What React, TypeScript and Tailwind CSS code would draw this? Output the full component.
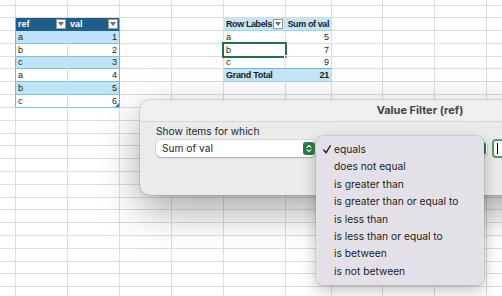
import React from "react";

const COLS = [
  "w-[16px]",
  "w-[52px]",
  "w-[52px]",
  "w-[52px]",
  "w-[52px]",
  "w-[62px]",
  "w-[46px]",
  "w-[51px]",
  "w-[52px]",
  "w-[52px]",
  "w-[30px]",
];

const ROWS = [
  "h-[6px]", "h-[12px]", "h-[13px]", "h-[13px]", "h-[13px]", "h-[12px]",
  "h-[13px]", "h-[13px]", "h-[13px]", "h-[13px]", "h-[13px]", "h-[12px]",
  "h-[13px]", "h-[13px]", "h-[13px]", "h-[13px]", "h-[12px]", "h-[13px]",
  "h-[13px]", "h-[13px]", "h-[13px]", "h-[12px]", "h-[13px]", "h-[10px]",
];

const TABLE = [
  ["a", "1"],
  ["b", "2"],
  ["c", "3"],
  ["a", "4"],
  ["b", "5"],
  ["c", "6"],
];

const PIVOT = [
  ["a", "5"],
  ["b", "7"],
  ["c", "9"],
];

const OPTIONS = [
  "equals",
  "does not equal",
  "is greater than",
  "is greater than or equal to",
  "is less than",
  "is less than or equal to",
  "is between",
  "is not between",
];

function FilterButton() {
  return (
    <div className="flex h-[10px] w-[10px] shrink-0 items-center justify-center border border-[#9a9a9a] bg-white">
      <svg width="6" height="4" viewBox="0 0 6 4">
        <path d="M0 0 L6 0 L3 4 Z" fill="#6b6b6b" />
      </svg>
    </div>
  );
}

function Stepper() {
  return (
    <div className="flex h-[13px] w-[12px] items-center justify-center rounded-[3px] bg-[#2e7c49]">
      <svg width="6" height="9" viewBox="0 0 6 9" fill="none" stroke="white" strokeWidth="1.1" strokeLinecap="round" strokeLinejoin="round">
        <path d="M1 3.3 L3 1.3 L5 3.3" />
        <path d="M1 5.7 L3 7.7 L5 5.7" />
      </svg>
    </div>
  );
}

// what goes into one grid cell; returns classes and content
function cellFor(r: number, c: number): { cls: string; body?: React.ReactNode } {
  const grid = "border-r border-b border-[#dcdcdc]";
  const t = r - 3; // table data row index

  // source table: header at row 2, data rows 3..8, columns 1..2
  if (c === 0 && r >= 2 && r <= 8) {
    return { cls: "border-b border-r border-b-[#dcdcdc] border-r-[#6fb7df]" };
  }
  if ((c === 1 || c === 2) && r === 2) {
    return {
      cls: "border-r border-b border-[#1f5e8b] bg-[#1f5e8b] " + (c === 1 ? "border-r-[#1f5e8b]" : "border-r-[#6fb7df]"),
      body: (
        <div className="flex h-full items-center justify-between pl-[2px] pr-[1px] font-bold text-white">
          <span>{c === 1 ? "ref" : "val"}</span>
          <FilterButton />
        </div>
      ),
    };
  }
  if ((c === 1 || c === 2) && t >= 0 && t < TABLE.length) {
    const band = t % 2 === 0;
    const bg = band ? "bg-[#c0e3f5]" : "bg-white";
    let border = "border-r border-b border-b-[#7fc0e4] ";
    if (c === 2) border += "border-r-[#6fb7df]";
    else border += band ? "border-r-[#c0e3f5]" : "border-r-[#dcdcdc]";
    return {
      cls: `${bg} ${border} relative`,
      body: (
        <>
          <div className={`flex h-full items-center px-[2px] ${c === 2 ? "justify-end" : ""}`}>
            {TABLE[t][c - 1]}
          </div>
          {c === 2 && t === TABLE.length - 1 && (
            <svg className="absolute bottom-0 right-0" width="4" height="4" viewBox="0 0 4 4">
              <path d="M4 0 L4 4 L0 4 Z" fill="#2a7fd0" />
            </svg>
          )}
        </>
      ),
    };
  }

  // pivot table: columns 5..6, header row 2, rows 3..5, total row 6
  if ((c === 5 || c === 6) && r === 2) {
    return {
      cls: "border-r border-b bg-[#c6e5f6] border-b-[#9fd1ee] " + (c === 5 ? "border-r-[#c6e5f6]" : "border-r-[#dcdcdc]"),
      body:
        c === 5 ? (
          <div className="flex h-full items-center justify-between whitespace-nowrap pl-[2px] pr-[2px] font-bold tracking-[-0.4px]">
            <span>Row Labels</span>
            <FilterButton />
          </div>
        ) : (
          <div className="flex h-full items-center justify-end whitespace-nowrap pr-[2px] font-bold tracking-[-0.4px]">
            Sum of val
          </div>
        ),
    };
  }
  if ((c === 5 || c === 6) && r >= 3 && r <= 5) {
    const row = PIVOT[r - 3];
    return {
      cls: `${grid} relative ${r === 5 ? "border-b-[#6eb3dd]" : ""}`,
      body: (
        <>
          <div className={`flex h-full items-center px-[2px] ${c === 6 ? "justify-end" : ""}`}>
            {row[c - 5]}
          </div>
          {c === 5 && r === 4 && (
            <div className="absolute -bottom-[2px] -left-[2px] -right-[2px] -top-[2px] border-2 border-[#217346]">
              <div className="absolute -bottom-[3px] -right-[3px] h-[4px] w-[4px] border border-white bg-[#217346]" />
            </div>
          )}
        </>
      ),
    };
  }
  if ((c === 5 || c === 6) && r === 6) {
    return {
      cls: "border-r border-b bg-[#c6e5f6] border-b-[#9fd1ee] " + (c === 5 ? "border-r-[#c6e5f6]" : "border-r-[#dcdcdc]"),
      body: (
        <div className={`flex h-full items-center whitespace-nowrap px-[2px] font-bold tracking-[-0.3px] ${c === 6 ? "justify-end" : ""}`}>
          {c === 5 ? "Grand Total" : "21"}
        </div>
      ),
    };
  }

  return { cls: grid };
}

function Sheet() {
  return (
    <div className="flex flex-col text-[9px] leading-none text-[#1d1d1d] [font-family:'Liberation_Sans',Arial,sans-serif]">
      {ROWS.map((h, r) => (
        <div key={r} className={`flex ${h}`}>
          {COLS.map((w, c) => {
            const cell = cellFor(r, c);
            return (
              <div key={c} className={`${w} shrink-0 ${cell.cls}`}>
                {cell.body}
              </div>
            );
          })}
        </div>
      ))}
    </div>
  );
}

function Dialog() {
  return (
    <div className="absolute left-[140px] top-[100px] h-[95px] w-[560px] overflow-hidden rounded-[10px] bg-[#ebebeb] shadow-[0_14px_40px_rgba(0,0,0,0.36),0_0_0_1px_rgba(0,0,0,0.12)]">
      <div className="flex h-[22px] items-center justify-center border-b border-[#d6d6d6] bg-[#efefef] text-[11px] font-bold text-[#444]">
        Value Filter (ref)
      </div>
      <div className="pl-[16px] pt-[2px] text-[10.2px] text-[#262626]">
        <div className="h-[14px] leading-[14px]">Show items for which</div>
        <div className="mt-[1px] flex items-center">
          <div className="flex h-[17px] w-[160px] items-center justify-between rounded-[5px] bg-white pl-[6px] pr-[1px] shadow-[0_0_0_0.5px_rgba(0,0,0,0.15),0_1px_1.5px_rgba(0,0,0,0.2)]">
            <span>Sum of val</span>
            <Stepper />
          </div>
          <div className="ml-[9px] flex h-[17px] w-[162px] items-center justify-end rounded-[5px] bg-white pr-[1px] shadow-[0_0_0_0.5px_rgba(0,0,0,0.15),0_1px_1.5px_rgba(0,0,0,0.2)]">
            <Stepper />
          </div>
          <div className="ml-[5px] flex h-[19px] w-[50px] items-center rounded-[4px] border-[2.5px] border-[#5b9a6e] bg-white pl-[3px]">
            <div className="h-[11px] w-px bg-black" />
          </div>
        </div>
      </div>
    </div>
  );
}

function Menu() {
  return (
    <div className="absolute left-[316px] top-[136px] w-[168px] rounded-[7px] bg-[#e3e1e7] py-[5px] text-[10.25px] text-[#222] shadow-[0_5px_16px_rgba(0,0,0,0.25),0_0_0_0.5px_rgba(0,0,0,0.18)]">
      {OPTIONS.map((o, i) => (
        <div key={o} className="relative flex h-[17.4px] items-center pl-[18px]">
          {i === 0 && (
            <svg className="absolute left-[7px] top-[4px]" width="8" height="9" viewBox="0 0 8 9" fill="none" stroke="#222" strokeWidth="1.4" strokeLinecap="round" strokeLinejoin="round">
              <path d="M0.8 5 L3 7.8 L7.2 0.8" />
            </svg>
          )}
          {o}
        </div>
      ))}
    </div>
  );
}

export default function App() {
  return (
    <div className="relative h-[296px] w-[502px] overflow-hidden bg-white [font-family:Inter,'Noto_Sans',sans-serif]">
      <Sheet />
      <Dialog />
      <Menu />
    </div>
  );
}
